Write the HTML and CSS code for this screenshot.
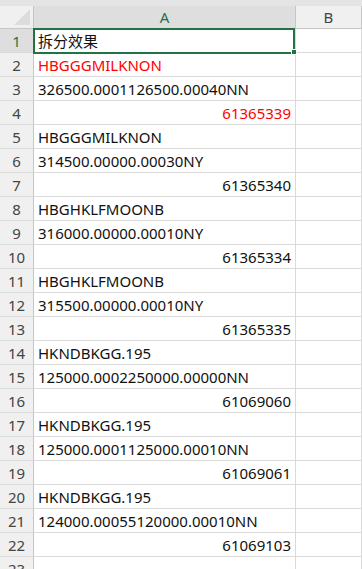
FILE: index.html
```html
<!DOCTYPE html>
<html lang="zh-CN">
<head>
    <meta charset="UTF-8">
    <title>拆分效果</title>
    <link rel="stylesheet" href="styles.css">
</head>
<body>
    <div class="topbar"></div>
    <div class="sheet">
        <div class="corner"><span class="tri"></span></div>
        <div class="colhead active">A</div>
        <div class="colhead">B</div>

        <div class="rowhead active">1</div><div class="cell selected">拆分效果</div><div class="cell"></div>
        <div class="rowhead">2</div><div class="cell red">HBGGGMILKNON</div><div class="cell"></div>
        <div class="rowhead">3</div><div class="cell">326500.0001126500.00040NN</div><div class="cell"></div>
        <div class="rowhead">4</div><div class="cell num red">61365339</div><div class="cell"></div>
        <div class="rowhead">5</div><div class="cell">HBGGGMILKNON</div><div class="cell"></div>
        <div class="rowhead">6</div><div class="cell">314500.00000.00030NY</div><div class="cell"></div>
        <div class="rowhead">7</div><div class="cell num">61365340</div><div class="cell"></div>
        <div class="rowhead">8</div><div class="cell">HBGHKLFMOONB</div><div class="cell"></div>
        <div class="rowhead">9</div><div class="cell">316000.00000.00010NY</div><div class="cell"></div>
        <div class="rowhead">10</div><div class="cell num">61365334</div><div class="cell"></div>
        <div class="rowhead">11</div><div class="cell">HBGHKLFMOONB</div><div class="cell"></div>
        <div class="rowhead">12</div><div class="cell">315500.00000.00010NY</div><div class="cell"></div>
        <div class="rowhead">13</div><div class="cell num">61365335</div><div class="cell"></div>
        <div class="rowhead">14</div><div class="cell">HKNDBKGG.195</div><div class="cell"></div>
        <div class="rowhead">15</div><div class="cell">125000.0002250000.00000NN</div><div class="cell"></div>
        <div class="rowhead">16</div><div class="cell num">61069060</div><div class="cell"></div>
        <div class="rowhead">17</div><div class="cell">HKNDBKGG.195</div><div class="cell"></div>
        <div class="rowhead">18</div><div class="cell">125000.0001125000.00010NN</div><div class="cell"></div>
        <div class="rowhead">19</div><div class="cell num">61069061</div><div class="cell"></div>
        <div class="rowhead">20</div><div class="cell">HKNDBKGG.195</div><div class="cell"></div>
        <div class="rowhead">21</div><div class="cell">124000.00055120000.00010NN</div><div class="cell"></div>
        <div class="rowhead">22</div><div class="cell num">61069103</div><div class="cell"></div>
        <div class="rowhead">23</div><div class="cell"></div><div class="cell"></div>
    </div>
</body>
</html>
```

FILE: styles.css
```css
body {
    margin: 0;
    padding: 0;
    height: 569px;
    overflow: hidden;
    background: #fff;
    font-family: "Noto Sans", "Noto Sans CJK SC", sans-serif;
    color: #111;
}

.topbar {
    height: 6px;
    background-color: #e4e4e6;
}

.sheet {
    display: grid;
    grid-template-columns: 34px 262px 1fr;
    grid-template-rows: 23px;
    grid-auto-rows: 24px;
}

.sheet > div {
    box-sizing: border-box;
    border-right: 1px solid #dadada;
    border-bottom: 1px solid #dadada;
}

.corner {
    background-color: #f0f0f0;
    position: relative;
    border-color: #c6c6c6 !important;
}

.tri {
    position: absolute;
    right: 3px;
    bottom: 3px;
    width: 0;
    height: 0;
    border-left: 16px solid transparent;
    border-bottom: 16px solid #dcdcdc;
}

.colhead {
    background-color: #f0f0f0;
    border-color: #c6c6c6 !important;
    text-align: center;
    font-size: 15px;
    line-height: 23px;
    color: #444;
}

.rowhead {
    background-color: #f0f0f0;
    border-right-color: #c6c6c6 !important;
    text-align: center;
    font-size: 15px;
    line-height: 24px;
    color: #444;
}

.colhead.active,
.rowhead.active {
    background-color: #dedede;
    color: #217346;
}

.cell {
    font-size: 15px;
    line-height: 25px;
    padding-left: 4px;
    padding-right: 4px;
    white-space: nowrap;
    overflow: visible;
}

.cell.num {
    text-align: right;
}

.red {
    color: #ff0000;
}

.selected {
    position: relative;
}

.selected::after {
    content: "";
    position: absolute;
    top: -1px;
    left: -1px;
    right: 0;
    bottom: -2px;
    border: 2px solid #217346;
}

.selected::before {
    content: "";
    position: absolute;
    right: -2px;
    bottom: -3px;
    width: 6px;
    height: 6px;
    background-color: #217346;
    border: 1px solid #fff;
    box-sizing: border-box;
    z-index: 1;
}
```
